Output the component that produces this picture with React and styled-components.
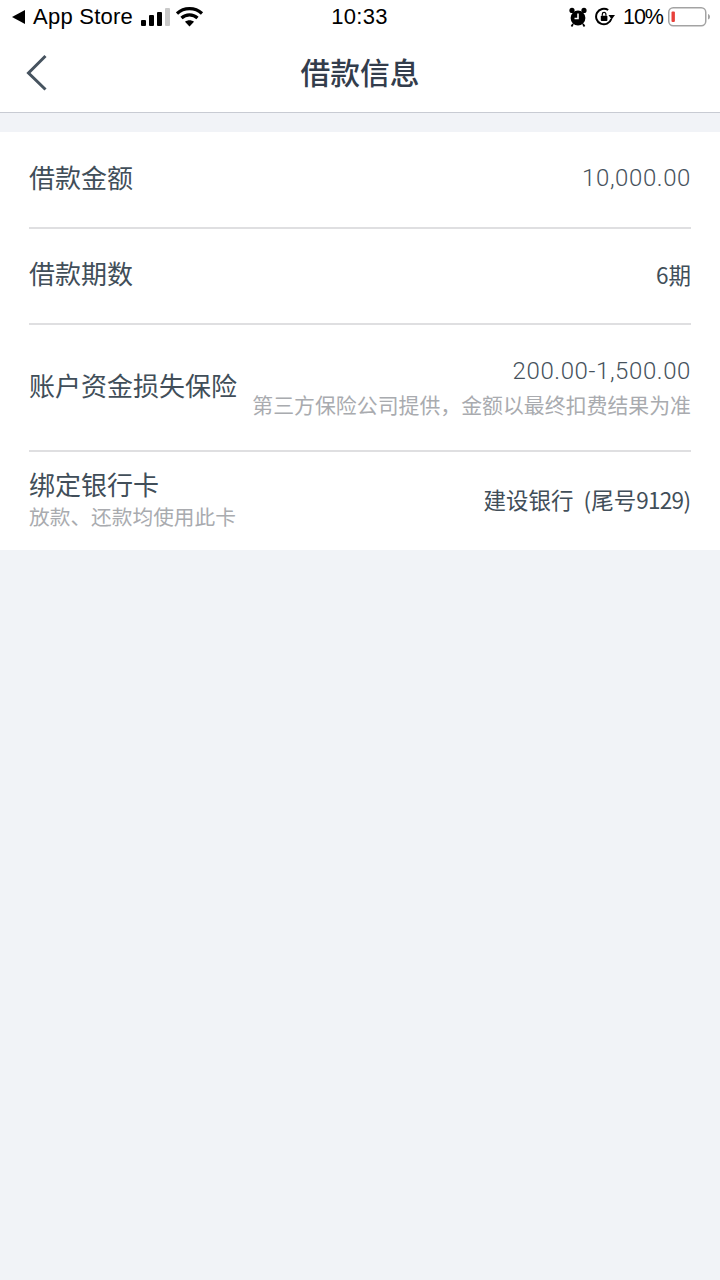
import React from 'react';
import styled, { createGlobalStyle } from 'styled-components';

const GlobalStyle = createGlobalStyle`
  html, body {
    margin: 0;
    padding: 0;
    background: #f1f3f7;
  }
  * {
    box-sizing: border-box;
  }
`;

const Page = styled.div`
  width: 720px;
  height: 1280px;
  background: #f1f3f7;
  font-family: "Roboto", "Noto Sans CJK SC", sans-serif;
  overflow: hidden;
`;

const StatusBar = styled.div`
  height: 36px;
  background: #fff;
  display: grid;
  grid-template-columns: 1fr auto 1fr;
  align-items: center;
  padding: 0 9px 2px 12px;
  color: #000;
  font-family: "Liberation Sans", sans-serif;
  font-size: 22px;
`;

const StatusLeft = styled.div`
  display: flex;
  align-items: center;
`;

const StatusRight = styled.div`
  display: flex;
  align-items: center;
  justify-content: flex-end;
`;

const Clock = styled.div`
  font-size: 22px;
  letter-spacing: 0.3px;
  margin-left: -4px;
`;

const NavBar = styled.div`
  height: 77px;
  background: #fff;
  border-bottom: 1px solid #c8cbd3;
  display: flex;
  align-items: center;
  justify-content: center;
  position: relative;
`;

const BackIcon = styled.svg`
  position: absolute;
  left: 26px;
  top: 18px;
`;

const Title = styled.div`
  font-family: "Noto Sans CJK SC", sans-serif;
  font-size: 29.8px;
  font-weight: 500;
  color: #333d4c;
  padding-bottom: 6px;
`;

const List = styled.div`
  margin-top: 19px;
  background: #fff;
  padding: 0 29px;
`;

const Row = styled.div`
  height: ${(p) => p.$height}px;
  padding-bottom: ${(p) => p.$lift}px;
  display: flex;
  justify-content: space-between;
  align-items: center;
  border-bottom: ${(p) => (p.$last ? 'none' : '2px solid #dfdfe1')};
`;

const Label = styled.div`
  font-family: "Noto Sans CJK SC", sans-serif;
  font-size: 26px;
  line-height: 32px;
  font-weight: 400;
  color: #414e59;
  margin-bottom: ${(p) => p.$raise || 0}px;
`;

const Side = styled.div`
  display: flex;
  flex-direction: column;
  align-items: ${(p) => (p.$end ? 'flex-end' : 'flex-start')};
`;

const Value = styled.div`
  font-size: 24px;
  line-height: 32px;
  font-weight: 300;
  letter-spacing: 0.6px;
  color: #46525c;
  margin-top: ${(p) => p.$drop || 0}px;
`;

const PlainValue = styled.div`
  font-family: "Noto Sans CJK SC", sans-serif;
  font-size: 22.5px;
  line-height: 32px;
  font-weight: 400;
  color: #414e59;
  word-spacing: 5px;
  margin-top: ${(p) => p.$drop || 0}px;
`;

const Digits = styled.span`
  letter-spacing: -0.7px;
`;

const Note = styled.div`
  font-family: "Noto Sans CJK SC", sans-serif;
  font-size: ${(p) => p.$size || 20.9}px;
  line-height: 30px;
  color: #a9abaf;
  margin-top: ${(p) => p.$gap || 0}px;
`;

const SignalIcon = () => (
  <svg width="30" height="20" viewBox="0 0 30 20" style={{ marginLeft: 7 }}>
    <rect x="1" y="13" width="5" height="6" rx="1" fill="#000" />
    <rect x="9" y="8" width="5" height="11" rx="1" fill="#000" />
    <rect x="17" y="5" width="5" height="14" rx="1" fill="#000" />
    <rect x="25" y="1" width="5" height="18" rx="1" fill="#c9c9c9" />
  </svg>
);

const WifiIcon = () => (
  <svg width="28" height="20" viewBox="0 0 28 20" style={{ marginLeft: 6 }}>
    <path d="M1 6.5 C8 0 19 0 26 6.5" fill="none" stroke="#000" strokeWidth="3.2" />
    <path d="M5.5 11 C10 6.8 17 6.8 21.5 11" fill="none" stroke="#000" strokeWidth="3.2" />
    <path d="M13.5 19.5 L9 14.8 C11.5 12.8 15.5 12.8 18 14.8 Z" fill="#000" />
  </svg>
);

const AlarmIcon = () => (
  <svg width="18" height="20" viewBox="0 0 18 20">
    <circle cx="9" cy="11" r="7.4" fill="#000" />
    <path d="M9 6.5 V11.5 H5.5" fill="none" stroke="#fff" strokeWidth="1.6" />
    <circle cx="3" cy="3.4" r="2.6" fill="#000" />
    <circle cx="15" cy="3.4" r="2.6" fill="#000" />
    <path d="M4 17 L2.5 19.5 M14 17 L15.5 19.5" stroke="#000" strokeWidth="1.8" />
  </svg>
);

const RotationIcon = () => (
  <svg width="20" height="20" viewBox="0 0 20 20" style={{ marginLeft: 8 }}>
    <path d="M16.3 12 A7.8 7.8 0 1 1 13.2 3" fill="none" stroke="#000" strokeWidth="2" />
    <path d="M13.5 8 L20 8 L16.7 12.5 Z" fill="#000" />
    <rect x="5.8" y="8.8" width="6.6" height="5.2" rx="0.8" fill="#000" />
    <path d="M7.3 8.8 V7.2 A1.8 1.8 0 0 1 10.9 7.2 V8.8" fill="none" stroke="#000" strokeWidth="1.2" />
  </svg>
);

const BatteryIcon = () => (
  <svg width="43" height="20" viewBox="0 0 43 20" style={{ marginLeft: 5 }}>
    <rect x="0.75" y="0.75" width="37" height="18" rx="4.5" fill="none" stroke="#a3a3a3" strokeWidth="1.5" />
    <rect x="3.5" y="4.5" width="3.4" height="10.5" rx="1" fill="#e8403a" />
    <path d="M40 7 C41.5 7.6 42 8.6 42 9.8 C42 11 41.5 12 40 12.6 Z" fill="#a3a3a3" />
  </svg>
);

const BatteryText = styled.span`
  margin-left: 8px;
  font-size: 21.5px;
  letter-spacing: -1px;
`;

const ArrowLeft = styled.svg`
  margin-right: 8px;
`;

const StoreName = styled.span`
  letter-spacing: 0.25px;
`;

export default function App() {
  return (
    <Page>
      <GlobalStyle />
      <StatusBar>
        <StatusLeft>
          <ArrowLeft width="13" height="14" viewBox="0 0 13 14">
            <path d="M0 7 L13 0 V14 Z" fill="#000" />
          </ArrowLeft>
          <StoreName>App Store</StoreName>
          <SignalIcon />
          <WifiIcon />
        </StatusLeft>
        <Clock>10:33</Clock>
        <StatusRight>
          <AlarmIcon />
          <RotationIcon />
          <BatteryText>10%</BatteryText>
          <BatteryIcon />
        </StatusRight>
      </StatusBar>
      <NavBar>
        <BackIcon width="22" height="38" viewBox="0 0 22 38">
          <path d="M19.5 2 L2.5 19 L19.5 35.5" fill="none" stroke="#46535f" strokeWidth="3" />
        </BackIcon>
        <Title>借款信息</Title>
      </NavBar>
      <List>
        <Row $height={97} $lift={6}>
          <Label>借款金额</Label>
          <Value $drop={2}>10,000.00</Value>
        </Row>
        <Row $height={96} $lift={6}>
          <Label>借款期数</Label>
          <PlainValue $drop={2}>6期</PlainValue>
        </Row>
        <Row $height={127} $lift={2}>
          <Label $raise={4}>账户资金损失保险</Label>
          <Side $end>
            <Value>200.00-1,500.00</Value>
            <Note $gap={2}>第三方保险公司提供，金额以最终扣费结果为准</Note>
          </Side>
        </Row>
        <Row $height={98} $lift={4} $last>
          <Side>
            <Label>绑定银行卡</Label>
            <Note $gap={1} $size={20.7}>放款、还款均使用此卡</Note>
          </Side>
          <PlainValue>
            建设银行 (尾号<Digits>9129</Digits>)
          </PlainValue>
        </Row>
      </List>
    </Page>
  );
}
